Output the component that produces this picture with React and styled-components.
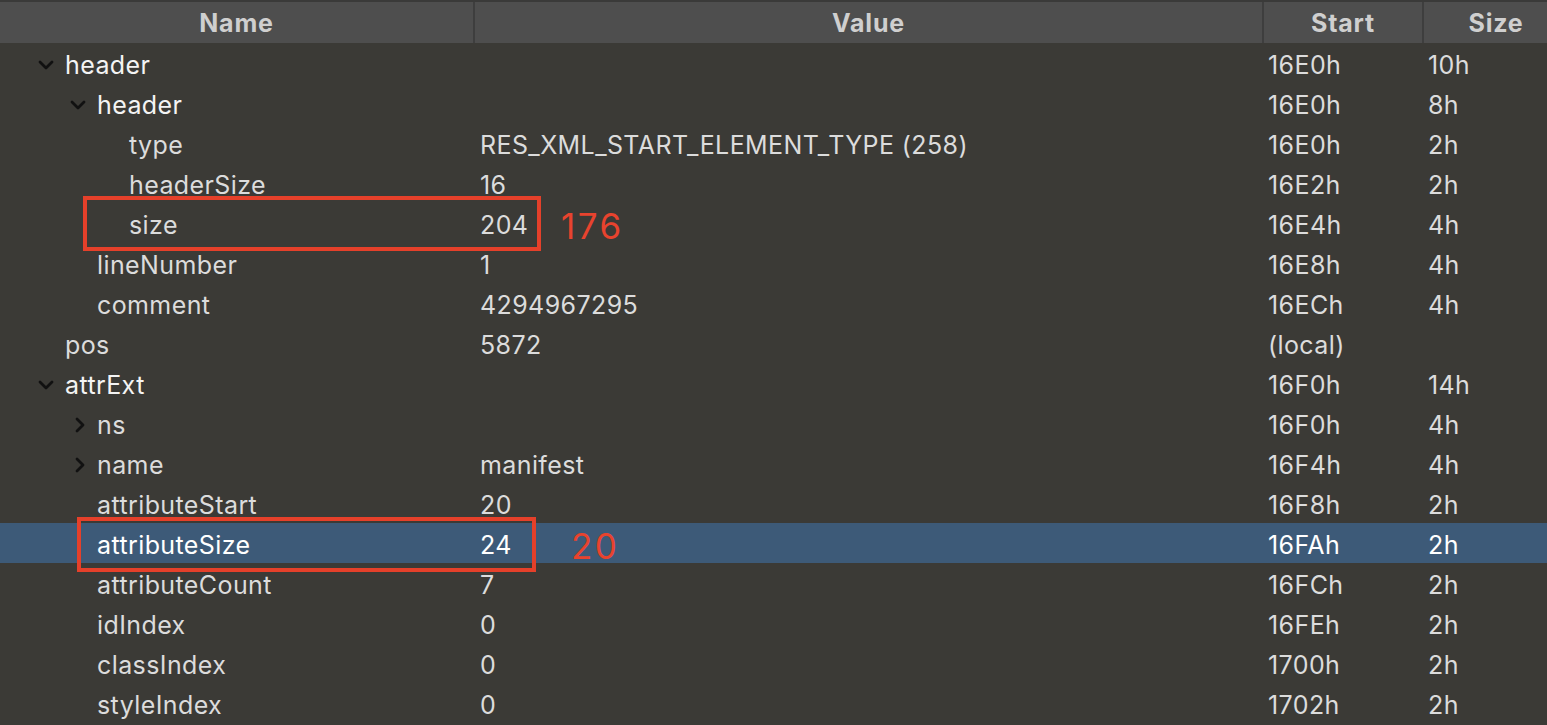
import React from "react";
import styled, { createGlobalStyle } from "styled-components";

const Global = createGlobalStyle`
  html, body { margin: 0; padding: 0; background: #3b3a36; overflow: hidden; }
  body { font-family: Inter, "Noto Sans", "Liberation Sans", sans-serif; }
`;

const COLS = "475px 789px 160px 144px";

const Table = styled.div`
  width: 1568px;
  height: 725px;
  background: #3b3a36;
  overflow: hidden;
`;

const HeaderBar = styled.div`
  display: grid;
  grid-template-columns: ${COLS};
  border-top: 2px solid #3a3a39;
  height: 41px;
  background: #4e4e4e;
`;

const HeadCell = styled.div`
  display: flex;
  align-items: center;
  justify-content: center;
  font-size: 25px;
  font-weight: 700;
  color: #cfcfcf;
  border-right: ${(p) => (p.$last ? "none" : "2px solid #3e3e3e")};
  letter-spacing: 0.8px;
`;

const Body = styled.div`
  position: relative;
`;

const Row = styled.div`
  display: grid;
  grid-template-columns: ${COLS};
  height: 40px;
  box-sizing: border-box;
  padding-top: 3px;
  align-items: center;
  background: ${(p) => (p.$selected ? "#3d5a78" : "transparent")};
  color: ${(p) => (p.$selected ? "#ffffff" : "#dcdcdc")};
  font-size: 25px;
  letter-spacing: 0.4px;
`;

const NameCell = styled.div`
  display: flex;
  align-items: center;
  padding-left: ${(p) => 65 + 32 * p.$level - 28}px;
  color: ${(p) => (p.$selected ? "#ffffff" : p.$bright ? "#f4f4f4" : "#dcdcdc")};
`;

const Toggle = styled.span`
  width: 28px;
  height: 20px;
  display: flex;
  align-items: center;
  justify-content: flex-start;
  flex-shrink: 0;
`;

const Cell = styled.div`
  padding-left: ${(p) => p.$pad}px;
  white-space: nowrap;
`;

const Mark = styled.div`
  position: absolute;
  left: ${(p) => p.$x}px;
  top: ${(p) => p.$y}px;
  width: ${(p) => p.$w}px;
  height: ${(p) => p.$h}px;
  border: 4px solid #e5402a;
  box-sizing: border-box;
  pointer-events: none;
`;

const MarkLabel = styled.div`
  position: absolute;
  left: ${(p) => p.$x}px;
  top: ${(p) => p.$y}px;
  font-size: 35px;
  font-weight: 400;
  letter-spacing: 2.5px;
  line-height: 1;
  color: #e8432e;
  font-family: Inter, "Noto Sans", sans-serif;
`;

const ChevronDown = () => (
  <svg width="16" height="10" viewBox="0 0 16 10" style={{ marginLeft: 1 }}>
    <path d="M2 2 L8 8 L14 2" fill="none" stroke="#111" strokeWidth="2.8" strokeLinecap="round" strokeLinejoin="round" />
  </svg>
);

const ChevronRight = () => (
  <svg width="10" height="16" viewBox="0 0 10 16" style={{ marginLeft: 6 }}>
    <path d="M2 2 L8 8 L2 14" fill="none" stroke="#111" strokeWidth="2.8" strokeLinecap="round" strokeLinejoin="round" />
  </svg>
);

const rows = [
  { name: "header", level: 0, tog: "down", value: "", start: "16E0h", size: "10h" },
  { name: "header", level: 1, tog: "down", value: "", start: "16E0h", size: "8h" },
  { name: "type", level: 2, value: "RES_XML_START_ELEMENT_TYPE (258)", start: "16E0h", size: "2h" },
  { name: "headerSize", level: 2, value: "16", start: "16E2h", size: "2h" },
  { name: "size", level: 2, value: "204", start: "16E4h", size: "4h" },
  { name: "lineNumber", level: 1, value: "1", start: "16E8h", size: "4h" },
  { name: "comment", level: 1, value: "4294967295", start: "16ECh", size: "4h" },
  { name: "pos", level: 0, value: "5872", start: "(local)", size: "" },
  { name: "attrExt", level: 0, tog: "down", value: "", start: "16F0h", size: "14h" },
  { name: "ns", level: 1, tog: "right", value: "", start: "16F0h", size: "4h" },
  { name: "name", level: 1, tog: "right", value: "manifest", start: "16F4h", size: "4h" },
  { name: "attributeStart", level: 1, value: "20", start: "16F8h", size: "2h" },
  { name: "attributeSize", level: 1, value: "24", start: "16FAh", size: "2h", selected: true },
  { name: "attributeCount", level: 1, value: "7", start: "16FCh", size: "2h" },
  { name: "idIndex", level: 1, value: "0", start: "16FEh", size: "2h" },
  { name: "classIndex", level: 1, value: "0", start: "1700h", size: "2h" },
  { name: "styleIndex", level: 1, value: "0", start: "1702h", size: "2h" },
];

export default function App() {
  return (
    <>
      <Global />
      <Table>
        <HeaderBar>
          <HeadCell>Name</HeadCell>
          <HeadCell>Value</HeadCell>
          <HeadCell>Start</HeadCell>
          <HeadCell $last>Size</HeadCell>
        </HeaderBar>
        <Body>
          {rows.map((r, i) => (
            <Row key={i} $selected={r.selected}>
              <NameCell $level={r.level} $selected={r.selected} $bright={r.level < 2 && r.tog === "down"}>
                <Toggle>{r.tog === "down" ? <ChevronDown /> : r.tog === "right" ? <ChevronRight /> : null}</Toggle>
                {r.name}
              </NameCell>
              <Cell $pad={5}>{r.value}</Cell>
              <Cell $pad={4}>{r.start}</Cell>
              <Cell $pad={4}>{r.size}</Cell>
            </Row>
          ))}
          <Mark $x={83} $y={153} $w={458} $h={55} />
          <MarkLabel $x={561} $y={166}>176</MarkLabel>
          <Mark $x={77} $y={474} $w={459} $h={55} />
          <MarkLabel $x={571} $y={486}>20</MarkLabel>
        </Body>
      </Table>
    </>
  );
}
